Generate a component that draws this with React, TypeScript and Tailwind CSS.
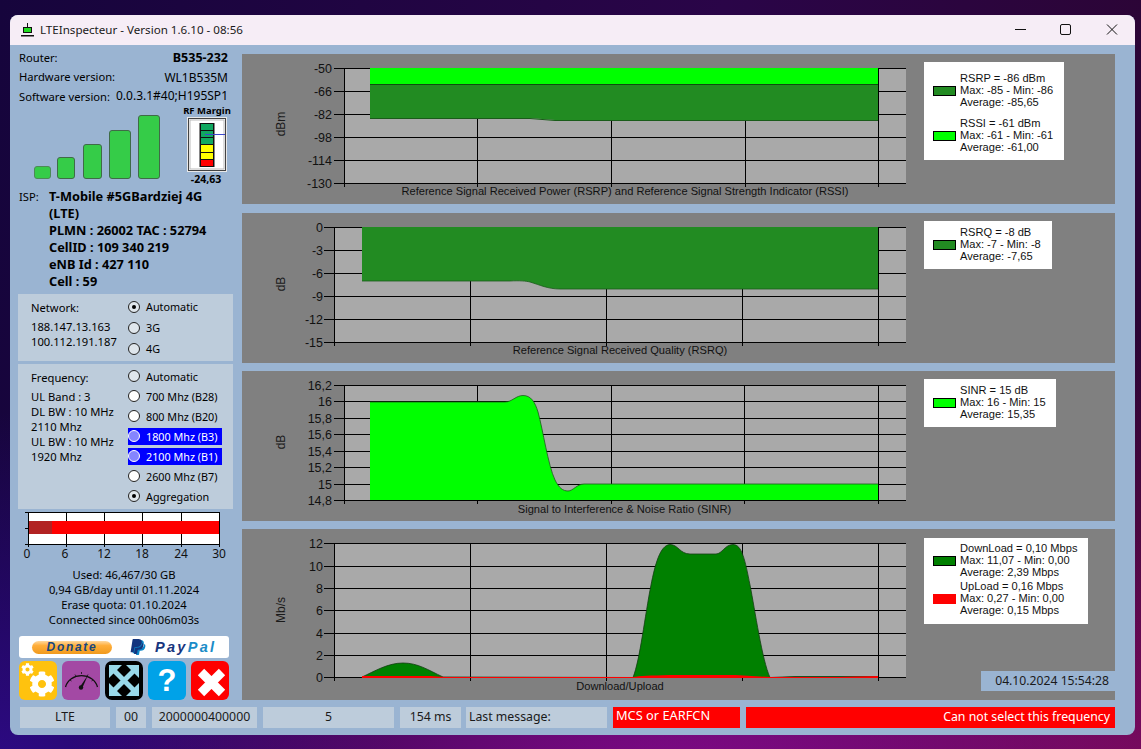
import React from "react";
import { FaCog, FaPaypal } from "react-icons/fa";

const ARIAL = "Liberation Sans, Arial, sans-serif";

type Series = { swatch: string; border?: boolean; lines: string[] };
type ChartDef = {
  top: number;
  h: number;
  left: number;
  ys: number[];
  labels: string[];
  labelX: number;
  xs: number[];
  unit: string;
  unitY: number;
  title: string;
  titleX: number;
  titleY: number;
  shapes: React.ReactNode;
};

function Chart({ d }: { d: ChartDef }) {
  const bottom = d.ys[d.ys.length - 1];
  return (
    <svg width={682} height={d.h} viewBox={`242 ${d.top} 682 ${d.h}`} className="shrink-0 block" fontFamily={ARIAL}>
      <rect x={d.left} y={d.ys[0]} width={906 - d.left} height={bottom - d.ys[0]} fill="#a9a9a9" />
      <g stroke="#000" strokeWidth={1} shapeRendering="crispEdges">
        {d.ys.map((y) => (
          <line key={y} x1={d.left - 10} x2={906} y1={y + 0.5} y2={y + 0.5} />
        ))}
        {d.xs.map((x) => (
          <line key={x} x1={x + 0.5} x2={x + 0.5} y1={d.ys[0]} y2={bottom + 4} />
        ))}
      </g>
      {d.shapes}
      {d.ys.map((y, i) => (
        <text key={y} x={d.labelX} y={y + 4.5} textAnchor="end" fontSize={12.5} fill="#111">
          {d.labels[i]}
        </text>
      ))}
      <text x={285} y={d.unitY} fontSize={12} fill="#1a1a1a" textAnchor="middle" transform={`rotate(-90 285 ${d.unitY})`}>
        {d.unit}
      </text>
      <text x={d.titleX} y={d.titleY} fontSize={11.1} fill="#111" textAnchor="middle">
        {d.title}
      </text>
    </svg>
  );
}

function Legend({ items, className }: { items: Series[]; className: string }) {
  return (
    <div className={`bg-white flex flex-col font-['Liberation_Sans'] text-[11.1px] leading-[12px] text-[#111] ${className}`}>
      {items.map((s) => (
        <div key={s.lines[0]} className="flex items-center pl-[9px] gap-[4px]">
          <div
            className={`w-[23px] h-[10px] shrink-0 mt-[2px] ${s.border === false ? "" : "border border-black"}`}
            style={{ background: s.swatch }}
          />
          <div className="whitespace-nowrap">
            {s.lines.map((l) => (
              <div key={l}>{l}</div>
            ))}
          </div>
        </div>
      ))}
    </div>
  );
}

function Radio({ fill, dot, hi }: { fill: string; dot?: boolean; hi?: boolean }) {
  return (
    <span
      className={`w-[12px] h-[12px] rounded-full shrink-0 flex items-center justify-center border ${hi ? "border-white" : "border-[#222]"}`}
      style={{ background: fill }}
    >
      {dot && <span className="w-[4px] h-[4px] rounded-full bg-black" />}
    </span>
  );
}

function RadioRow({ label, fill, dot, hi, h }: { label: string; fill: string; dot?: boolean; hi?: boolean; h: string }) {
  return (
    <div className={`flex items-center ${h}`}>
      <div className={`flex items-center w-[94px] h-[17px] gap-[6px] whitespace-nowrap text-[10.8px] ${hi ? "bg-[#0000ff] text-white" : ""}`}>
        <Radio fill={hi ? "#8585ff" : fill} dot={dot} hi={hi} />
        <span>{label}</span>
      </div>
    </div>
  );
}

function Status({ w, children, cls = "" }: { w: string; children: React.ReactNode; cls?: string }) {
  return <div className={`h-[21px] flex items-center shrink-0 whitespace-nowrap ${w} ${cls}`}>{children}</div>;
}

function GaugeIcon() {
  return (
    <svg viewBox="0 0 38 39" className="w-[38px] h-[39px]">
      <path d="M3.500 26 A16.500 15 0 0 1 35.500 26" fill="none" stroke="#111" strokeWidth="1.300" />
      <path d="M8 19l1.500 1M13 13.500l1 1.500M19.500 11v2M26 13.500l-1 1.500M31 19l-1.500 1" stroke="#111" strokeWidth="0.800" />
      <path d="M18.500 25 L26 14 L20.500 26.500 Z" fill="#111" />
      <circle cx="19" cy="26.500" r="2.200" fill="#111" />
    </svg>
  );
}

function ArrowsIcon() {
  return (
    <svg viewBox="0 0 38 39" className="w-[38px] h-[39px]">
      <rect x="0" y="0" width="38" height="39" rx="7" fill="#000" />
      <g stroke="#99d9ea" strokeWidth="5">
        <path d="M8 8.500L30 30.500M30 8.500L8 30.500" />
      </g>
      <g fill="#99d9ea">
        <path d="M4 4h13L4 17z" />
        <path d="M34 4H21l13 13z" />
        <path d="M4 35h13L4 22z" />
        <path d="M34 35H21l13-13z" />
      </g>
    </svg>
  );
}

function CrossIcon() {
  return (
    <svg viewBox="0 0 38 39" className="w-[38px] h-[39px]">
      <path d="M10 11L31 32M31 11L10 32" stroke="#fff" strokeWidth="9" />
    </svg>
  );
}

const charts: ChartDef[] = [
  {
    top: 54,
    h: 150,
    left: 344,
    ys: [68, 91, 114, 137, 160, 183],
    labels: ["-50", "-66", "-82", "-98", "-114", "-130"],
    labelX: 332,
    xs: [344, 477, 611, 745, 878],
    unit: "dBm",
    unitY: 124,
    title: "Reference Signal Received Power (RSRP) and Reference Signal Strength Indicator (RSSI)",
    titleX: 625,
    titleY: 195,
    shapes: (
      <g>
        <rect x={370} y={68} width={508} height={17} fill="#00ff00" />
        <path d="M370 84 H878 V120 H555 L530 118 H370 Z" fill="#228b22" />
        <path d="M370 84.500 H878" stroke="#0f4d0f" strokeWidth="1" fill="none" />
        <path d="M370 118.500 H530 L555 120.500 H878" stroke="#1a5c1a" strokeWidth="1" fill="none" />
      </g>
    ),
  },
  {
    top: 213,
    h: 150,
    left: 334,
    ys: [227, 250, 273, 296, 319, 342],
    labels: ["0", "-3", "-6", "-9", "-12", "-15"],
    labelX: 323,
    xs: [334, 470, 606, 742, 878],
    unit: "dB",
    unitY: 284,
    title: "Reference Signal Received Quality (RSRQ)",
    titleX: 620,
    titleY: 354,
    shapes: (
      <g>
        <path d="M362 227 H878 V289 H560 C548 289 540 285 530 282 C526 281 520 280.500 510 281 L362 281 Z" fill="#228b22" />
        <path
          d="M878 289 H560 C548 289 540 285 530 282 C526 281 520 280.500 510 281 L362 281"
          fill="none"
          stroke="#1a5c1a"
          strokeWidth="0.800"
        />
      </g>
    ),
  },
  {
    top: 371,
    h: 150,
    left: 344,
    ys: [385, 401, 418, 434, 451, 467, 484, 500],
    labels: ["16,2", "16", "15,8", "15,6", "15,4", "15,2", "15", "14,8"],
    labelX: 332,
    xs: [344, 477, 611, 744, 878],
    unit: "dB",
    unitY: 442,
    title: "Signal to Interference & Noise Ratio (SINR)",
    titleX: 624.5,
    titleY: 513,
    shapes: (
      <g>
        <path
          d="M370 500 V402 H505 C512 402 516 395.500 523 395.500 C531 395.500 535 402 538 412 C543 430 548 465 555 480 C559 488 563 491 568 491 C573 491 577 484 584 484 H878 V500 Z"
          fill="#00ff00"
        />
        <path
          d="M370 402 H505 C512 402 516 395.500 523 395.500 C531 395.500 535 402 538 412 C543 430 548 465 555 480 C559 488 563 491 568 491 C573 491 577 484 584 484 H878"
          fill="none"
          stroke="#1a5c1a"
          strokeWidth="0.800"
        />
      </g>
    ),
  },
  {
    top: 529,
    h: 171,
    left: 334,
    ys: [543, 566, 588, 610, 633, 655, 677],
    labels: ["12", "10", "8", "6", "4", "2", "0"],
    labelX: 323,
    xs: [334, 470, 606, 742, 878],
    unit: "Mb/s",
    unitY: 610,
    title: "Download/Upload",
    titleX: 620,
    titleY: 690,
    shapes: (
      <g>
        <path
          d="M362 677.500 V677 C375 671 388 663 403 663 C418 663 428 670 443 677 L633 677.500 C640 660 645 615 651 585 C655 565 660 545 670 544.500 C678 544.500 680 554 690 554 L716 554 C722 554 725 544.500 733 544.500 C742 544.500 745 560 750 585 C755 610 762 660 770 677.500 L795 676.500 L878 676.500 V677.500 Z"
          fill="#008000"
          stroke="#143d14"
          strokeWidth="0.800"
        />
        <path
          d="M362 678 V676 L430 676 L445 677 L633 677 C640 676 650 675.500 670 675 L735 675 L770 677 L840 677 L878 676 V678 Z"
          fill="#ff0000"
        />
      </g>
    ),
  },
];

const freq: { label: string; fill: string; dot?: boolean; hi?: boolean }[] = [
  { label: "Automatic", fill: "#dfe6ec" },
  { label: "700 Mhz (B28)", fill: "#fff" },
  { label: "800 Mhz (B20)", fill: "#fff" },
  { label: "1800 Mhz (B3)", fill: "#fff", hi: true },
  { label: "2100 Mhz (B1)", fill: "#fff", hi: true },
  { label: "2600 Mhz (B7)", fill: "#fff" },
  { label: "Aggregation", fill: "#dfe6ec", dot: true },
];

export default function App() {
  return (
    <div className="w-[1141px] h-[749px] overflow-hidden pt-[15px] pl-[10px] bg-[radial-gradient(ellipse_55%_60%_at_60%_112%,#8a0a8e_0%,#8a0a8e00_100%),radial-gradient(ellipse_45%_60%_at_100%_105%,#750a50_0%,#750a5000_100%),radial-gradient(ellipse_35%_50%_at_0%_105%,#2e0a88_0%,#2e0a8800_100%),linear-gradient(95deg,#16053c_0%,#2a0548_60%,#2c0534_100%)]">
      <div className="w-[1125px] h-[720px] rounded-[8px] overflow-hidden flex flex-col bg-[#9ab4d2] font-['Noto_Sans'] text-[11.2px] text-black">
        {/* title bar */}
        <div className="h-[30px] shrink-0 bg-[#f6edf6] flex items-center relative">
          <svg width="13" height="14" viewBox="0 0 13 14" className="ml-[11px] shrink-0">
            <path d="M6 0h1v4H6z" fill="#111" />
            <rect x="2.500" y="4.500" width="8" height="5" fill="#22dd22" stroke="#111" />
            <path d="M0 12h13v1.500H0z" fill="#111" />
          </svg>
          <span className="ml-[6px] text-[11.6px] text-[#1a1a1a] whitespace-nowrap">LTEInspecteur - Version 1.6.10 - 08:56</span>
          <div className="ml-auto flex items-center text-black">
            <svg width="46" height="30" viewBox="0 0 46 30"><path d="M18 14.500h11" stroke="#111" /></svg>
            <svg width="46" height="30" viewBox="0 0 46 30"><rect x="17.500" y="9.500" width="10" height="10" rx="1.500" fill="none" stroke="#111" /></svg>
            <svg width="46" height="30" viewBox="0 0 46 30" className="mr-0"><path d="M18 9.500l10 10M28 9.500l-10 10" stroke="#111" /></svg>
          </div>
        </div>

        {/* main */}
        <div className="flex h-[655px] shrink-0">
          {/* sidebar */}
          <div className="w-[232px] shrink-0 flex flex-col pt-[4px]">
            <div className="pl-[9px] pr-[14px]">
              <div className="h-[19px] flex items-center justify-between">
                <span>Router:</span>
                <span className="font-bold text-[12.5px]">B535-232</span>
              </div>
              <div className="h-[19px] flex items-center justify-between">
                <span>Hardware version:</span>
                <span className="text-[12px]">WL1B535M</span>
              </div>
              <div className="h-[20px] flex items-center justify-between">
                <span>Software version:</span>
                <span className="text-[12px] mb-[3px]">0.0.3.1#40;H195SP1</span>
              </div>
            </div>

            <div className="h-[80px] flex">
              <div className="flex items-end pb-[8px] pl-[24px] w-[173px] shrink-0">
                <div className="w-[17px] h-[13px] rounded-[3px] bg-[#35cc48] border border-[#4c8a56]" />
                <div className="w-[18px] h-[22px] ml-[6px] rounded-[3px] bg-[#35cc48] border border-[#3f6b47]" />
                <div className="w-[19px] h-[35px] ml-[8px] rounded-[3px] bg-[#35cc48] border border-[#3f6b47]" />
                <div className="w-[22px] h-[49px] ml-[7px] rounded-[3px] bg-[#35cc48] border border-[#3f6b47]" />
                <div className="w-[22px] h-[64px] ml-[7px] rounded-[3px] bg-[#35cc48] border border-[#3f6b47]" />
              </div>
              <div className="w-[48px] flex flex-col items-center shrink-0">
                <div className="h-[10px] text-[9.500px] leading-[7px] font-bold whitespace-nowrap">RF Margin</div>
                <svg width="40" height="55" viewBox="0 0 40 55" className="block shrink-0">
                  <rect x="0.500" y="0.500" width="39" height="54" fill="#fff" stroke="#e8e8e8" />
                  <rect x="1.500" y="1.500" width="37" height="52" fill="#fff" stroke="#444" />
                  <rect x="3" y="3" width="34" height="49" fill="#fff" stroke="#bbb" />
                  <rect x="12" y="6" width="16" height="44" fill="#888" />
                  <rect x="13.500" y="6.500" width="13" height="21" fill="#10a860" stroke="#111" />
                  <path d="M13.500 13.500h13M13.500 20.500h13" stroke="#111" />
                  <rect x="13.500" y="27.500" width="13" height="15" fill="#ffff00" stroke="#111" />
                  <path d="M13.500 35.500h13" stroke="#111" />
                  <rect x="13.500" y="42.500" width="13" height="7" fill="#ff0000" stroke="#111" />
                  <path d="M18 17.500h20" stroke="#3c48cc" strokeWidth="1.200" />
                </svg>
                <div className="h-[15px] flex items-center text-[10.500px] font-bold -ml-[2px]">-24,63</div>
              </div>
            </div>

            <div className="flex mt-[1px] pl-[9px] leading-[17px]">
              <span className="w-[30px] shrink-0">ISP:</span>
              <div className="font-bold text-[12.75px] whitespace-nowrap">
                <div>T-Mobile #5GBardziej 4G</div>
                <div>(LTE)</div>
                <div>PLMN : 26002 TAC : 52794</div>
                <div>CellID : 109 340 219</div>
                <div>eNB Id : 427 110</div>
                <div>Cell : 59</div>
              </div>
            </div>

            {/* Network */}
            <div className="ml-[8px] w-[215px] h-[67px] mt-[4px] bg-[#bdccdb] flex leading-[15px] shrink-0">
              <div className="w-[102px] pl-[13px] pt-[6px] shrink-0">
                <div>Network:</div>
                <div className="mt-[4px]">188.147.13.163</div>
                <div>100.112.191.187</div>
              </div>
              <div className="pt-[2px] ml-[8px]">
                <RadioRow h="h-[21px]" label="Automatic" fill="#dfe6ec" dot />
                <RadioRow h="h-[21px]" label="3G" fill="#dfe6ec" />
                <RadioRow h="h-[21px]" label="4G" fill="#dfe6ec" />
              </div>
            </div>

            {/* Frequency */}
            <div className="ml-[8px] w-[215px] h-[145px] mt-[3px] bg-[#bdccdb] flex leading-[15px] shrink-0">
              <div className="w-[102px] pl-[13px] pt-[6px] shrink-0 whitespace-nowrap">
                <div>Frequency:</div>
                <div className="mt-[4px]">UL Band : 3</div>
                <div>DL BW : 10 MHz</div>
                <div>2110 Mhz</div>
                <div>UL BW : 10 MHz</div>
                <div>1920 Mhz</div>
              </div>
              <div className="pt-[2px] ml-[8px]">
                {freq.map((f) => (
                  <RadioRow key={f.label} h="h-[20px]" {...f} />
                ))}
              </div>
            </div>

            {/* quota */}
            <svg width="232" height="52" viewBox="10 511 232 52" className="block mt-[2px] shrink-0" fontFamily="Noto Sans, sans-serif">
              <rect x="28" y="512" width="192" height="32" fill="#fff" />
              <rect x="29" y="521" width="190" height="13" fill="#ff0000" />
              <rect x="29" y="521" width="23" height="13" fill="#b22222" />
              <g stroke="#000" shapeRendering="crispEdges">
                <rect x="28.500" y="512.500" width="191" height="32" fill="none" />
                {[66, 104, 142, 181].map((x) => (
                  <g key={x}>
                    <line x1={x + 0.5} x2={x + 0.5} y1={513} y2={521} />
                    <line x1={x + 0.5} x2={x + 0.5} y1={534} y2={544} />
                  </g>
                ))}
                <line x1="25" x2="28" y1="512.500" y2="512.500" />
                <line x1="25" x2="28" y1="528.500" y2="528.500" />
                <line x1="25" x2="28" y1="544.500" y2="544.500" />
                {[28, 66, 104, 142, 181, 219].map((x) => (
                  <line key={x} x1={x + 0.5} x2={x + 0.5} y1={545} y2={547} />
                ))}
              </g>
              {[
                ["0", 27],
                ["6", 65],
                ["12", 104],
                ["18", 142],
                ["24", 181],
                ["30", 219],
              ].map(([t, x]) => (
                <text key={t} x={x} y={558} fontSize={12} textAnchor="middle" fill="#111">
                  {t}
                </text>
              ))}
            </svg>

            <div className="mt-[4px] w-[228px] text-center leading-[15px] whitespace-nowrap">
              <div>Used: 46,467/30 GB</div>
              <div>0,94 GB/day until 01.11.2024</div>
              <div>Erase quota: 01.10.2024</div>
              <div>Connected since 00h06m03s</div>
            </div>

            {/* donate */}
            <div className="ml-[9px] mt-[9px] w-[210px] h-[22px] bg-white rounded-[3px] flex items-center shrink-0 font-['Liberation_Sans']">
              <div className="ml-[13px] w-[80px] h-[13px] rounded-full bg-[linear-gradient(180deg,#ffd9a0_0%,#ffae3a_35%,#f09a1e_100%)] flex items-center justify-center text-[#17467e] text-[12px] leading-none font-bold italic tracking-[1.700px]">
                Donate
              </div>
              <span className="relative w-[19px] h-[18px] ml-[17px] shrink-0">
                <FaPaypal className="absolute left-[2px] top-[1px] w-[16px] h-[17px] text-[#0a86c8]" />
                <FaPaypal className="absolute left-0 top-0 w-[16px] h-[17px] text-[#14357e]" />
              </span>
              <span className="ml-[7px] text-[14.5px] font-bold italic tracking-[2.300px] text-[#17357e] leading-none">
                Pay<span className="text-[#1a8cc8]">Pal</span>
              </span>
            </div>

            {/* buttons */}
            <div className="ml-[9px] mt-[3px] flex gap-[5px] shrink-0">
              <div className="w-[38px] h-[39px] rounded-[6px] bg-[#ffc20e] relative overflow-hidden">
                <FaCog className="absolute left-[10px] top-[10px] w-[26px] h-[26px] text-white" />
                <FaCog className="absolute left-[2px] top-[2px] w-[13px] h-[13px] text-white" />
              </div>
              <div className="w-[38px] h-[39px] rounded-[6px] bg-[#a349a4]">
                <GaugeIcon />
              </div>
              <ArrowsIcon />
              <div className="w-[38px] h-[39px] rounded-[6px] bg-[#00a2e8] flex items-center justify-center text-white font-['Liberation_Sans'] font-bold text-[31px] leading-none">
                ?
              </div>
              <div className="w-[38px] h-[39px] rounded-[6px] bg-[#ff0000]">
                <CrossIcon />
              </div>
            </div>
          </div>

          {/* charts */}
          <div className="w-[873px] shrink-0 pt-[9px] flex flex-col font-['Liberation_Sans']">
            <div className="h-[150px] bg-[#808080] flex shrink-0">
              <Chart d={charts[0]} />
              <Legend
                className="w-[140px] h-[98px] mt-[8px] pt-[10px] gap-[9px]"
                items={[
                  { swatch: "#228b22", lines: ["RSRP = -86 dBm", "Max: -85 - Min: -86", "Average: -85,65"] },
                  { swatch: "#00ff00", lines: ["RSSI = -61 dBm", "Max: -61 - Min: -61", "Average: -61,00"] },
                ]}
              />
            </div>
            <div className="h-[150px] mt-[9px] bg-[#808080] flex shrink-0">
              <Chart d={charts[1]} />
              <Legend
                className="w-[128px] h-[48px] mt-[8px] pt-[5px]"
                items={[{ swatch: "#228b22", lines: ["RSRQ = -8 dB", "Max: -7 - Min: -8", "Average: -7,65"] }]}
              />
            </div>
            <div className="h-[150px] mt-[8px] bg-[#808080] flex shrink-0">
              <Chart d={charts[2]} />
              <Legend
                className="w-[132px] h-[48px] mt-[8px] pt-[5px]"
                items={[{ swatch: "#00ff00", lines: ["SINR = 15 dB", "Max: 16 - Min: 15", "Average: 15,35"] }]}
              />
            </div>
            <div className="h-[171px] mt-[8px] bg-[#808080] flex shrink-0">
              <Chart d={charts[3]} />
              <div className="flex-1 flex flex-col">
                <Legend
                  className="w-[164px] h-[86px] mt-[9px] pt-[4px] gap-[2px]"
                  items={[
                    { swatch: "#008000", lines: ["DownLoad = 0,10 Mbps", "Max: 11,07 - Min: 0,00", "Average: 2,39 Mbps"] },
                    { swatch: "#ff0000", border: false, lines: ["UpLoad = 0,16 Mbps", "Max: 0,27 - Min: 0,00", "Average: 0,15 Mbps"] },
                  ]}
                />
                <div className="mt-auto mb-[9px] self-end w-[134px] h-[20px] bg-[#9ab4d2] flex items-center justify-end pr-[6px] font-['Noto_Sans'] text-[12.2px] text-[#1a1a1a] whitespace-nowrap">
                  04.10.2024 15:54:28
                </div>
              </div>
            </div>
          </div>
        </div>

        {/* status */}
        <div className="mt-[7px] ml-[10px] flex gap-[6px] text-[12.3px] text-[#1a1a1a] shrink-0">
          <Status w="w-[90px] justify-center" cls="bg-[#bdccdb]">LTE</Status>
          <Status w="w-[30px] justify-center" cls="bg-[#bdccdb]">00</Status>
          <Status w="w-[105px] justify-center" cls="bg-[#bdccdb]">2000000400000</Status>
          <Status w="w-[131px] justify-center" cls="bg-[#bdccdb]">5</Status>
          <Status w="w-[61px] justify-center" cls="bg-[#bdccdb]">154 ms</Status>
          <Status w="w-[141px] pl-[3px] -ml-[1px]" cls="bg-[#bdccdb]">Last message:</Status>
          <Status w="w-[127px] pl-[3px] pb-[3px] text-[12.8px]" cls="bg-[#ff0000] text-white">MCS or EARFCN</Status>
          <Status w="w-[369px] justify-end pr-[5px]" cls="bg-[#ff0000] text-white">Can not select this frequency</Status>
        </div>
      </div>
    </div>
  );
}
